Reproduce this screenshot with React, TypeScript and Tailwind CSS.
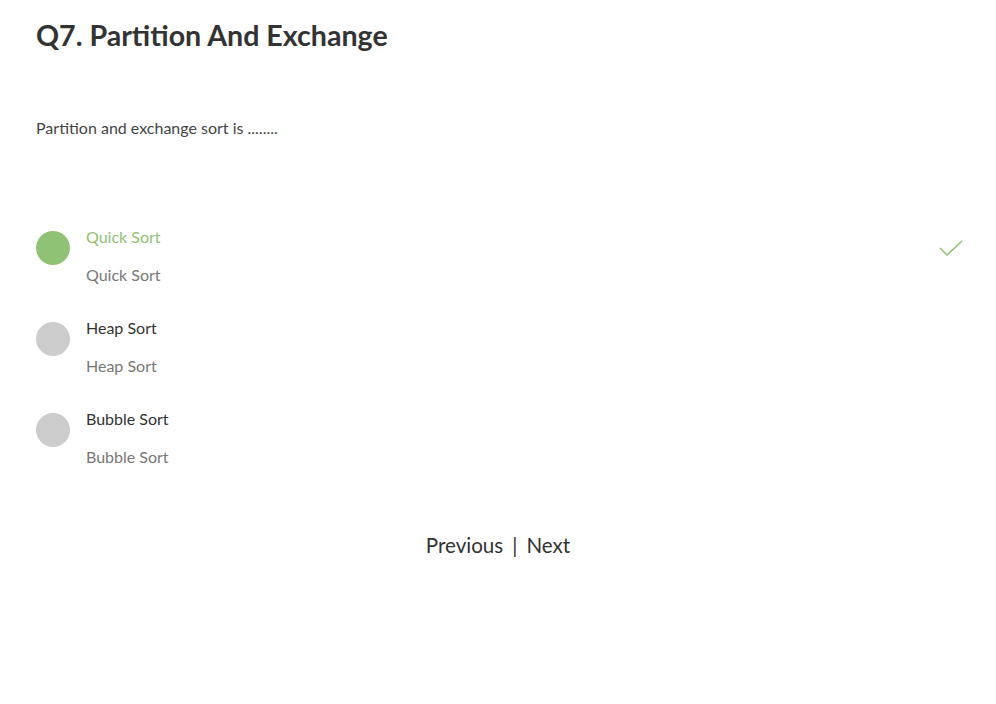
import React from "react";

const options = [
  { label: "Quick Sort", correct: true },
  { label: "Heap Sort", correct: false },
  { label: "Bubble Sort", correct: false },
];

export default function App() {
  return (
    <div
      className="w-[996px] h-[704px] bg-white text-[#333] px-[36px] pt-[17px]"
      style={{ fontFamily: "Lato, 'Open Sans', sans-serif" }}
    >
      <h1 className="text-[28.6px] font-bold leading-[36px] text-[#333]">Q7. Partition And Exchange</h1>
      <p className="mt-[65px] text-[16px] leading-[20px] text-[#444]">Partition and exchange sort is ........</p>
      <div className="mt-[89px] flex flex-col gap-[33px]">
        {options.map((o) => (
          <div key={o.label} className="flex items-start">
            <div
              className={`mt-[4px] w-[34px] h-[34px] rounded-full shrink-0 ${o.correct ? "bg-[#8fc275]" : "bg-[#cccccc]"}`}
            />
            <div className="ml-[16px] flex-1">
              <div className={`text-[16px] leading-[20px] ${o.correct ? "text-[#8fc275]" : "text-[#333]"}`}>{o.label}</div>
              <div className="mt-[18px] text-[16px] leading-[20px] text-[#777]">{o.label}</div>
            </div>
            {o.correct && (
              <svg width="26" height="20" viewBox="0 0 26 20" className="mt-[11px] mr-[-4px]">
                <path d="M2 10 L9 17 L24 3" fill="none" stroke="#8fc275" strokeWidth="1.6" />
              </svg>
            )}
          </div>
        ))}
      </div>
      <div className="mt-[65px] flex justify-center items-center text-[20.6px] leading-[26px] text-[#333] gap-[9px]">
        <span>Previous</span>
        <span>|</span>
        <span>Next</span>
      </div>
    </div>
  );
}
